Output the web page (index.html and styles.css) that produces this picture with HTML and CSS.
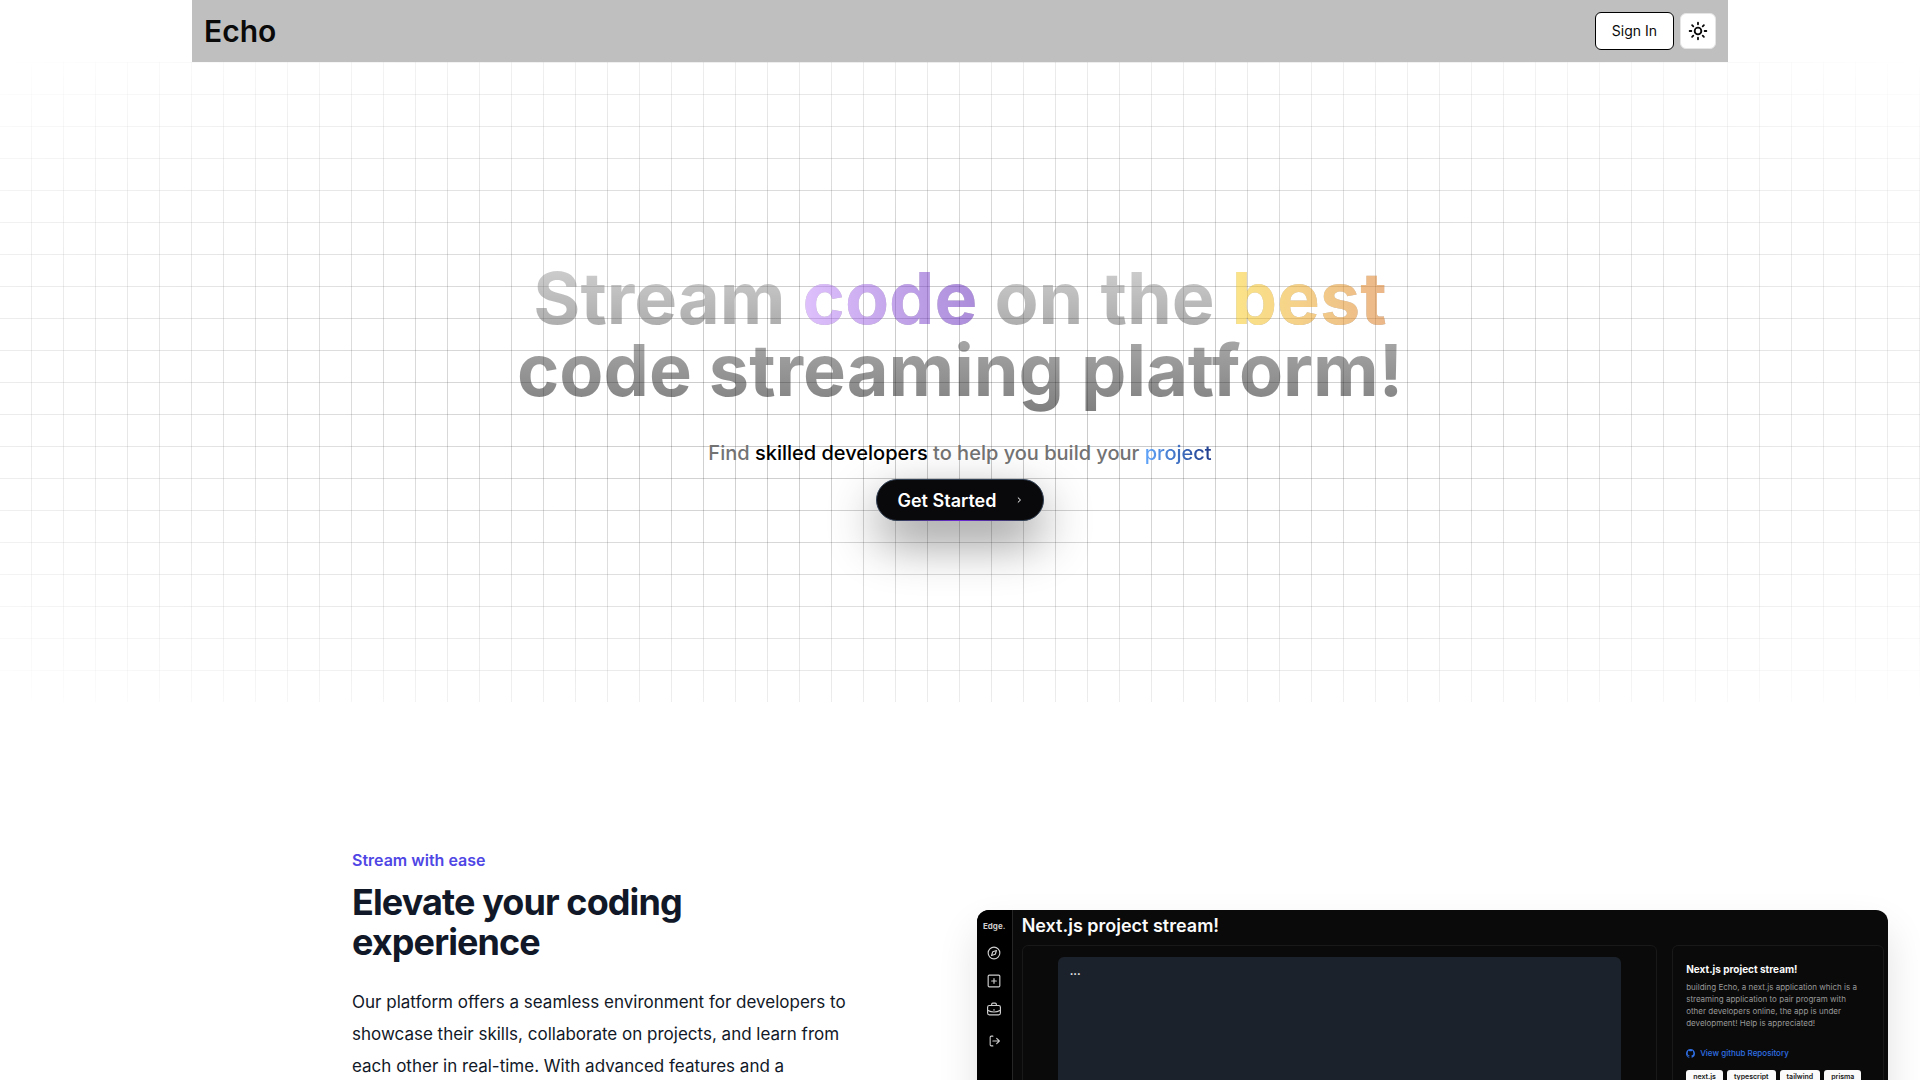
FILE: index.html
```html
<!DOCTYPE html>
<html lang="en">
<head>
    <meta charset="UTF-8">
    <meta name="viewport" content="width=device-width, initial-scale=1.0">
    <title>Echo</title>
    <link rel="stylesheet" href="styles.css">
</head>
<body>
    <header class="navbar">
        <a href="#" class="logo">Echo</a>
        <div class="nav-actions">
            <button class="sign-in">Sign In</button>
            <button class="theme-toggle" aria-label="Toggle theme">
                <svg width="20" height="20" viewBox="0 0 24 24" fill="none" stroke="currentColor" stroke-width="2.2" stroke-linecap="round" stroke-linejoin="round">
                    <circle cx="12" cy="12" r="4"/>
                    <path d="M12 2v2M12 20v2M4.93 4.93l1.41 1.41M17.66 17.66l1.41 1.41M2 12h2M20 12h2M6.34 17.66l-1.41 1.41M19.07 4.93l-1.41 1.41"/>
                </svg>
            </button>
        </div>
    </header>

    <section class="hero">
        <div class="hero-content">
            <h1>Stream <span class="code">code</span> on the <span class="best">best</span><br>code streaming platform!</h1>
            <p class="tagline">Find <span class="strong">skilled developers</span> to help you build your <span class="project">project</span></p>
            <button class="get-started">
                <span>Get Started</span>
                <svg width="16" height="16" viewBox="0 0 24 24" fill="none" stroke="currentColor" stroke-width="1.5" stroke-linecap="round" stroke-linejoin="round">
                    <path d="M10.75 8.75L14.25 12L10.75 15.25"/>
                </svg>
            </button>
        </div>
    </section>

    <section class="feature">
        <div class="feature-text">
            <p class="eyebrow">Stream with ease</p>
            <h2>Elevate your coding experience</h2>
            <p class="lead">Our platform offers a seamless environment for developers to showcase their skills, collaborate on projects, and learn from each other in real-time. With advanced features and a</p>
        </div>

        <div class="preview">
            <nav class="preview-nav">
                <span class="preview-logo">Edge.</span>
                <a href="#" aria-label="Browse">
                    <svg viewBox="0 0 24 24"><circle cx="12" cy="12" r="10"/><path d="M16.2 7.8l-2.1 6.3-6.3 2.1 2.1-6.3z"/></svg>
                </a>
                <a href="#" aria-label="Create">
                    <svg viewBox="0 0 24 24"><rect x="2" y="2" width="20" height="20" rx="2"/><path d="M8 12h8M12 8v8"/></svg>
                </a>
                <a href="#" aria-label="Your rooms">
                    <svg viewBox="0 0 24 24"><rect x="1" y="6" width="22" height="16" rx="3"/><path d="M8 6V4a2 2 0 0 1 2-2h4a2 2 0 0 1 2 2v2M1 14c7 4 15 4 22 0M12 13v1"/></svg>
                </a>
                <a href="#" class="logout" aria-label="Log out">
                    <svg viewBox="0 0 24 24"><path d="M9 21H6a2 2 0 0 1-2-2V5a2 2 0 0 1 2-2h3M9 12h12M16 7l5 5-5 5"/></svg>
                </a>
            </nav>
            <div class="preview-main">
                <h3>Next.js project stream!</h3>
                <div class="preview-columns">
                    <div class="stage">
                        <div class="screen">...</div>
                    </div>
                    <div class="info">
                        <h4>Next.js project stream!</h4>
                        <p>building Echo, a next.js application which is a<br>streaming application to pair program with<br>other developers online, the app is under<br>development! Help is appreciated!</p>
                        <a href="#" class="repo">
                            <svg width="9" height="9" viewBox="0 0 16 16" fill="currentColor"><path d="M8 0C3.58 0 0 3.58 0 8c0 3.54 2.29 6.53 5.47 7.59.4.07.55-.17.55-.38 0-.19-.01-.82-.01-1.49-2.01.37-2.53-.49-2.69-.94-.09-.23-.48-.94-.82-1.13-.28-.15-.68-.52-.01-.53.63-.01 1.08.58 1.23.82.72 1.21 1.87.87 2.33.66.07-.52.28-.87.51-1.07-1.78-.2-3.64-.89-3.64-3.95 0-.87.31-1.59.82-2.15-.08-.2-.36-1.02.08-2.12 0 0 .67-.21 2.2.82.64-.18 1.32-.27 2-.27s1.36.09 2 .27c1.53-1.04 2.2-.82 2.2-.82.44 1.1.16 1.92.08 2.12.51.56.82 1.27.82 2.15 0 3.07-1.87 3.75-3.65 3.95.29.25.54.73.54 1.48 0 1.07-.01 1.93-.01 2.2 0 .21.15.46.55.38A8.01 8.01 0 0 0 16 8c0-4.42-3.58-8-8-8z"/></svg>
                            View github Repository
                        </a>
                        <div class="tags">
                            <span>next.js</span><span>typescript</span><span>tailwind</span><span>prisma</span>
                        </div>
                    </div>
                </div>
            </div>
        </div>
    </section>
</body>
</html>
```
FILE: styles.css
```css
* {
    box-sizing: border-box;
}
body {
    margin: 0;
    font-family: Inter, sans-serif;
    background: #ffffff;
    color: #0a0a0a;
}
h1, h2, h3, h4, p {
    margin: 0;
}
a {
    color: inherit;
    text-decoration: none;
}
button {
    font-family: inherit;
    cursor: pointer;
}

/* Navbar */
.navbar {
    display: flex;
    align-items: center;
    justify-content: space-between;
    width: 80%;
    margin: 0 auto;
    padding: 12px;
    background: #bfbfbf;
}
.logo {
    font-size: 30px;
    line-height: 36px;
    font-weight: 600;
}
.nav-actions {
    display: flex;
    align-items: center;
    gap: 6px;
}
.sign-in {
    height: 38px;
    padding: 0 16px 2px;
    border: 1px solid #000000;
    border-radius: 6px;
    background: #ffffff;
    color: #0a0a0a;
    font-size: 14px;
}
.theme-toggle {
    display: grid;
    place-items: center;
    width: 36px;
    height: 36px;
    padding: 0;
    border: 1px solid #e5e5e5;
    border-radius: 6px;
    background: #ffffff;
    color: #0a0a0a;
}

/* Hero */
.hero {
    position: relative;
    display: flex;
    justify-content: center;
    height: 640px;
    padding-top: 200px;
}
.hero::before {
    content: "";
    position: absolute;
    inset: 0;
    background-image:
        linear-gradient(to bottom, rgba(0, 0, 0, 0.2) 1px, transparent 1px),
        linear-gradient(to left, rgba(0, 0, 0, 0.2) 1px, transparent 1px);
    background-size: 32px 32px;
    -webkit-mask-image: radial-gradient(ellipse at center, #000 20%, transparent);
    mask-image: radial-gradient(ellipse at center, #000 20%, transparent);
}
.hero-content {
    position: relative;
    display: flex;
    flex-direction: column;
    align-items: center;
}
.hero h1 {
    padding-bottom: 8px;
    font-size: 72px;
    line-height: 72px;
    font-weight: 700;
    text-align: center;
    color: transparent;
    background: linear-gradient(to bottom, #a3a3a3, #000000);
    -webkit-background-clip: text;
    background-clip: text;
    opacity: 0.5;
}
.hero h1 span,
.tagline .project {
    color: transparent;
    -webkit-background-clip: text;
    background-clip: text;
}
.hero h1 .code {
    background-image: linear-gradient(to right, #c084fc, #581cb7);
}
.hero h1 .best {
    background-image: linear-gradient(to right, #facc15, #d97016);
}
.tagline {
    margin-top: 24px;
    font-size: 20px;
    line-height: 30px;
    font-weight: 500;
    color: #737373;
}
.tagline .strong {
    color: #000000;
}
.tagline .project {
    background-image: linear-gradient(to right, #60a5fa, #1e3a8a);
}
.get-started {
    position: relative;
    display: flex;
    align-items: center;
    gap: 14px;
    height: 42px;
    margin-top: 11px;
    padding: 0 16px 0 20px;
    border: 1px solid #334155;
    border-radius: 21px;
    background: #09090b;
    color: #ffffff;
    font-size: 18px;
    font-weight: 600;
    box-shadow: 0 20px 50px rgba(0, 0, 0, 0.45);
}
.get-started::after {
    content: "";
    position: absolute;
    left: 20px;
    right: 20px;
    bottom: -1px;
    height: 1px;
    background: linear-gradient(to right, transparent, #6d28d9, transparent);
}

/* Feature */
.feature {
    display: grid;
    grid-template-columns: 9fr 16fr;
    gap: 112px;
    margin-top: 144px;
    padding: 0 32px 0 352px;
}
.eyebrow {
    font-size: 16px;
    line-height: 28px;
    font-weight: 600;
    color: #4f46e5;
}
.feature h2 {
    margin-top: 8px;
    font-size: 36px;
    line-height: 40px;
    font-weight: 700;
    letter-spacing: -0.025em;
    color: #111827;
}
.lead {
    margin-top: 24px;
    font-size: 17px;
    line-height: 32px;
    color: #111827;
}

/* Stream preview */
.preview {
    display: flex;
    height: 560px;
    margin-top: 64px;
    overflow: hidden;
    border-radius: 12px;
    background: #0a0a0a;
    color: #fafafa;
    box-shadow: 0 20px 40px rgba(0, 0, 0, 0.12);
}
.preview-nav {
    display: flex;
    flex-direction: column;
    align-items: center;
    gap: 14px;
    width: 36px;
    padding-top: 11px;
    border-right: 1px solid #262626;
    background: #000000;
    color: #cccccc;
}
.preview-logo {
    margin-bottom: 1px;
    font-size: 8px;
    line-height: 10px;
    font-weight: 700;
}
.preview-nav a {
    height: 14px;
}
.preview-nav .logout {
    margin-top: 4px;
}
.preview-nav svg {
    display: block;
    width: 14px;
    height: 14px;
    fill: none;
    stroke: currentColor;
    stroke-width: 2;
    stroke-linecap: round;
    stroke-linejoin: round;
}
.preview-nav .logout svg {
    width: 13px;
}
.preview-main {
    flex: 1;
    display: flex;
    flex-direction: column;
    padding: 4px 4px 0 9px;
}
.preview h3 {
    font-size: 18px;
    line-height: 24px;
    font-weight: 600;
}
.preview-columns {
    flex: 1;
    display: grid;
    grid-template-columns: 3fr 1fr;
    gap: 15px;
    margin-top: 7px;
}
.stage,
.info {
    border: 1px solid #191919;
    border-radius: 6px;
}
.stage {
    padding: 11px 35px;
}
.screen {
    height: 100%;
    padding: 8px 12px;
    border-radius: 6px;
    background: #1c222c;
    font-size: 11px;
    line-height: 12px;
    font-weight: 700;
}
.info {
    padding: 16px 13px;
}
.info h4 {
    font-size: 10px;
    line-height: 14px;
    font-weight: 700;
}
.info p {
    margin-top: 5px;
    font-size: 8px;
    line-height: 12px;
    color: #999999;
    white-space: nowrap;
}
.repo {
    display: flex;
    align-items: center;
    gap: 5px;
    margin-top: 18px;
    font-size: 8px;
    line-height: 12px;
    font-weight: 500;
    color: #2f6fe4;
}
.tags {
    display: flex;
    gap: 4px;
    margin-top: 11px;
}
.tags span {
    padding: 0 7px;
    border-radius: 3px;
    background: #fafafa;
    color: #171717;
    font-size: 7px;
    line-height: 14px;
    font-weight: 600;
}
```
